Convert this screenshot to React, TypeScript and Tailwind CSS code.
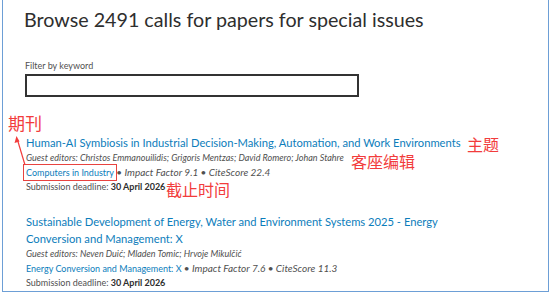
import React from "react";

const F = { fontFamily: "Lato, 'Noto Sans', sans-serif" };
const CJK = { fontFamily: "'Noto Sans CJK SC', sans-serif" };

function Meta({ journal, impact, cite, boxed }: { journal: string; impact: string; cite: string; boxed?: boolean }) {
  return (
    <div className="text-[10px] leading-[14px] text-[#505050] italic whitespace-nowrap">
      <span className={boxed ? "not-italic text-[9px] text-[#0c7dbb] outline outline-[1.5px] outline-[#e8433f] outline-offset-[2px]" : "not-italic text-[9px] text-[#0c7dbb]"}>
        {journal}
      </span>
      <span> • Impact Factor {impact} • CiteScore {cite}</span>
    </div>
  );
}

export default function App() {
  return (
    <div className="w-[550px] h-[293px] bg-white overflow-hidden relative" style={F}>
      <div className="ml-[2px] w-[547px] h-[292px] border border-t-0 border-[#6d9fd6] pl-[21px] pt-[6px]">
        <h1 className="text-[19.7px] leading-[28px] text-[#2e2e2e] whitespace-nowrap">
          Browse 2491 calls for papers for special issues
        </h1>
        <div className="mt-[26px] text-[9px] leading-[12px] text-[#505050] pl-[1px]">Filter by keyword</div>
        <div className="mt-[2px] ml-[1px] w-[334px] h-[23px] border-2 border-[#333]" />

        <div className="mt-[37px]">
          <div className="text-[11.2px] leading-[17px] text-[#0c7dbb] whitespace-nowrap pl-[2px]">
            Human-AI Symbiosis in Industrial Decision-Making, Automation, and Work Environments
          </div>
          <div className="pl-[2px]">
            <div className="text-[9px] leading-[14px] text-[#505050] italic whitespace-nowrap">
              Guest editors: Christos Emmanouilidis; Grigoris Mentzas; David Romero; Johan Stahre
            </div>
            <Meta journal="Computers in Industry" impact="9.1" cite="22.4" boxed />
            <div className="text-[9px] leading-[14px] text-[#505050] whitespace-nowrap">
              Submission deadline: <span className="font-bold text-[#2e2e2e]">30 April 2026</span>
            </div>
          </div>
        </div>

        <div className="mt-[19px] pl-[2px]">
          <div className="text-[11.2px] leading-[17px] text-[#0c7dbb] w-[420px]">
            Sustainable Development of Energy, Water and Environment Systems 2025 - Energy Conversion and Management: X
          </div>
          <div className="text-[9px] leading-[14px] text-[#505050] italic whitespace-nowrap">
            Guest editors: Neven Duić; Mladen Tomic; Hrvoje Mikulčić
          </div>
          <Meta journal="Energy Conversion and Management: X" impact="7.6" cite="11.3" />
          <div className="text-[9px] leading-[14px] text-[#505050] whitespace-nowrap">
            Submission deadline: <span className="font-bold text-[#2e2e2e]">30 April 2026</span>
          </div>
        </div>
      </div>

      {/* annotations */}
      <div className="absolute left-[8px] top-[113px] text-[17px] leading-[20px] text-[#f23c3c]" style={CJK}>期刊</div>
      <div className="absolute left-[467px] top-[134px] text-[16px] leading-[20px] text-[#f23c3c]" style={CJK}>主题</div>
      <div className="absolute left-[351px] top-[151px] text-[16px] leading-[20px] text-[#f23c3c]" style={CJK}>客座编辑</div>
      <div className="absolute left-[166px] top-[179px] text-[16px] leading-[20px] text-[#f23c3c]" style={CJK}>截止时间</div>
      <svg className="absolute left-0 top-0" width="550" height="293" viewBox="0 0 550 293">
        <line x1="25" y1="165" x2="17.5" y2="140" stroke="#f23c3c" strokeWidth="1.2" />
        <path d="M16.5 136 L14.5 143 L19.5 141.5 Z" fill="#f23c3c" />
      </svg>
    </div>
  );
}
